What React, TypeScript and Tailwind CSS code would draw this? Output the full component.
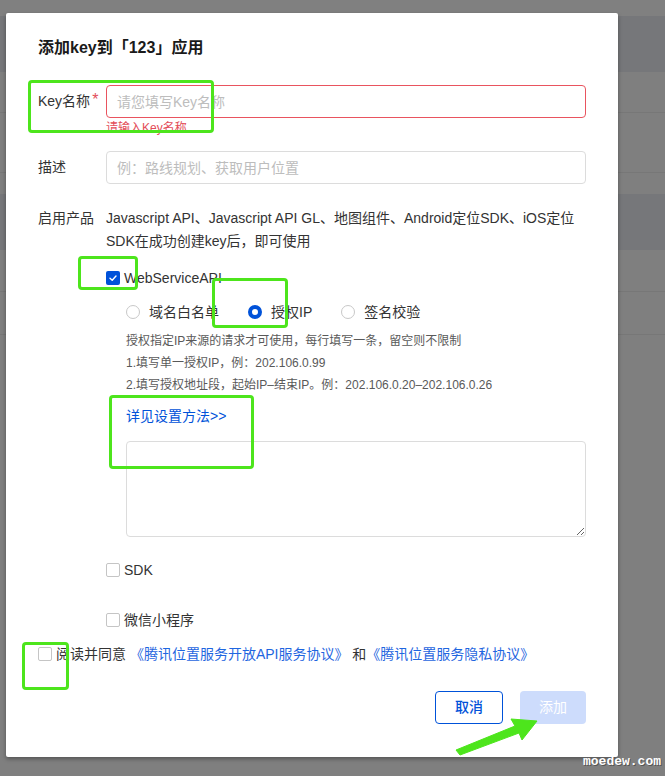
import React from "react";

const font = { fontFamily: '"Liberation Sans", "Noto Sans CJK SC", sans-serif' };

const Checkbox = ({ checked }: { checked?: boolean }) =>
    checked ? (
        <span className="flex h-[14px] w-[14px] shrink-0 items-center justify-center rounded-[2px] bg-[#0052d9]">
            <svg width="10" height="10" viewBox="0 0 10 10" fill="none">
                <path d="M2 5.2 L4.2 7.2 L8 3" stroke="#fff" strokeWidth="1.4" strokeLinecap="round" strokeLinejoin="round" />
            </svg>
        </span>
    ) : (
        <span className="h-[14px] w-[14px] shrink-0 rounded-[2px] border border-[#c5c5c5] bg-white" />
    )

const Radio = ({ checked, label }: { checked?: boolean; label: string }) => (
    <div className="flex items-center">
        {checked ? (
            <span className="h-[14px] w-[14px] rounded-full border-[4px] border-[#0052d9] bg-white" />
        ) : (
            <span className="h-[14px] w-[14px] rounded-full border border-[#c8c8c8] bg-white" />
        )}
        <span className="ml-[9px] text-[14px] leading-[20px] text-[#333]">{label}</span>
    </div>
)

const Mark = ({ cls }: { cls: string }) => (
    <div className={`pointer-events-none absolute rounded-[4px] border-[3px] border-[#4de51c] ${cls}`} />
)

const App = () => {
    return (
        <div className="relative h-[776px] w-[665px] overflow-hidden bg-[#7f7f7f]" style={font}>
            {/* page behind the mask */}
            <div className="flex flex-col">
                <div className="h-[16px] bg-[#808080]" />
                <div className="h-[56px] bg-[#76777a]" />
                <div className="h-[41px] border-b border-[#777]" />
                <div className="h-[60px] border-b border-[#777]" />
                <div className="h-[21px]" />
                <div className="h-[56px] bg-[#76777a]" />
                <div className="h-[42px] border-b border-[#777]" />
                <div className="h-[43px] border-b border-[#777]" />
            </div>

            {/* dialog */}
            <div className="absolute left-[6px] top-[13px] flex h-[744px] w-[612px] flex-col rounded-[2px] bg-white px-[32px] pt-[23px] shadow-[0_2px_4px_rgba(0,0,0,0.35)]">
                <h3 className="text-[16px] font-semibold leading-[24px] text-[#1a1a1a]">添加key到「123」应用</h3>

                <div className="mt-[25px] flex">
                    <div className="flex h-[33px] w-[68px] shrink-0 items-center text-[14px] text-[#333]">
                        Key名称<span className="ml-[2px] -mt-[4px] text-[16px] leading-none text-[#e34d59]">*</span>
                    </div>
                    <div className="flex-1">
                        <input
                            className="h-[33px] w-full rounded-[4px] border border-[#e9545f] px-[10px] text-[14px] outline-none placeholder:text-[#bdbdbd]"
                            placeholder="请您填写Key名称"
                        />
                        <div className="text-[12px] leading-[20px] text-[#e34d59]">请输入Key名称</div>
                    </div>
                </div>

                <div className="mt-[13px] flex">
                    <div className="flex h-[33px] w-[68px] shrink-0 items-center text-[14px] text-[#333]">描述</div>
                    <input
                        className="h-[33px] flex-1 rounded-[4px] border border-[#dcdcdc] px-[10px] text-[14px] outline-none placeholder:text-[#bdbdbd]"
                        placeholder="例：路线规划、获取用户位置"
                    />
                </div>

                <div className="mt-[23px] flex">
                    <div className="w-[68px] shrink-0 text-[14px] leading-[23px] text-[#333]">启用产品</div>
                    <div className="flex-1">
                        <p className="text-[14px] leading-[23px] text-[#333]">
                            Javascript API、Javascript API GL、地图组件、Android定位SDK、iOS定位
                            <br />
                            SDK在成功创建key后，即可使用
                        </p>
                        <div className="mt-[15px] flex h-[20px] items-center">
                            <Checkbox checked />
                            <span className="ml-[4px] text-[14px] text-[#333]">WebServiceAPI</span>
                        </div>
                        <div className="pl-[20px]">
                            <div className="mt-[14px] flex h-[20px] items-center gap-[29px]">
                                <Radio label="域名白名单" />
                                <Radio checked label="授权IP" />
                                <Radio label="签名校验" />
                            </div>
                            <div className="mt-[8px] text-[12px] leading-[22px] text-[#595959]">
                                <p>授权指定IP来源的请求才可使用，每行填写一条，留空则不限制</p>
                                <p>1.填写单一授权IP，例：202.106.0.99</p>
                                <p>2.填写授权地址段，起始IP–结束IP。例：202.106.0.20–202.106.0.26</p>
                            </div>
                            <a className="mt-[9px] block text-[14px] leading-[22px] text-[#0052d9]">详见设置方法&gt;&gt;</a>
                            <textarea className="mt-[14px] block h-[96px] w-full rounded-[4px] border border-[#dcdcdc] outline-none" />
                        </div>
                        <div className="mt-[23px] flex h-[20px] items-center">
                            <Checkbox />
                            <span className="ml-[4px] text-[14px] text-[#333]">SDK</span>
                        </div>
                        <div className="mt-[30px] flex h-[20px] items-center">
                            <Checkbox />
                            <span className="ml-[4px] text-[14px] text-[#333]">微信小程序</span>
                        </div>
                    </div>
                </div>

                <div className="mt-[14px] flex h-[20px] items-center text-[14px] text-[#333]">
                    <Checkbox />
                    <span className="ml-[4px] whitespace-pre">阅读并同意 </span>
                    <a className="text-[#1f66e0]">《腾讯位置服务开放API服务协议》</a>
                    <span className="whitespace-pre"> 和</span>
                    <a className="text-[#1f66e0]">《腾讯位置服务隐私协议》</a>
                </div>

                <div className="mt-[27px] flex justify-end gap-[17px]">
                    <button className="h-[33px] w-[68px] rounded-[4px] border border-[#0052d9] text-[14px] font-medium text-[#0052d9]">取消</button>
                    <button className="h-[33px] w-[66px] rounded-[4px] bg-[#cddcfc] text-[14px] text-white">添加</button>
                </div>
            </div>

            {/* annotations */}
            <Mark cls="left-[28px] top-[80px] h-[53px] w-[186px]" />
            <Mark cls="left-[78px] top-[256px] h-[34px] w-[60px]" />
            <Mark cls="left-[212px] top-[278px] h-[50px] w-[76px]" />
            <Mark cls="left-[109px] top-[395px] h-[74px] w-[145px]" />
            <Mark cls="left-[22px] top-[642px] h-[48px] w-[47px]" />
            <svg className="pointer-events-none absolute left-0 top-0" width="665" height="776">
                <polygon
                    points="456,750 515,726 511,719 537,721 522,740 519,733 460,755"
                    fill="#4de51c"
                    stroke="#4de51c"
                    strokeWidth="1"
                    strokeLinejoin="round"
                />
            </svg>

            <div
                className="absolute left-[583px] top-[754px] text-[13px] font-bold leading-[16px] text-white [text-shadow:1px_1px_0_#555]"
                style={{ fontFamily: '"Liberation Mono", "DejaVu Sans Mono", monospace' }}
            >
                moedew.com
            </div>
        </div>
    )
}

export default App
